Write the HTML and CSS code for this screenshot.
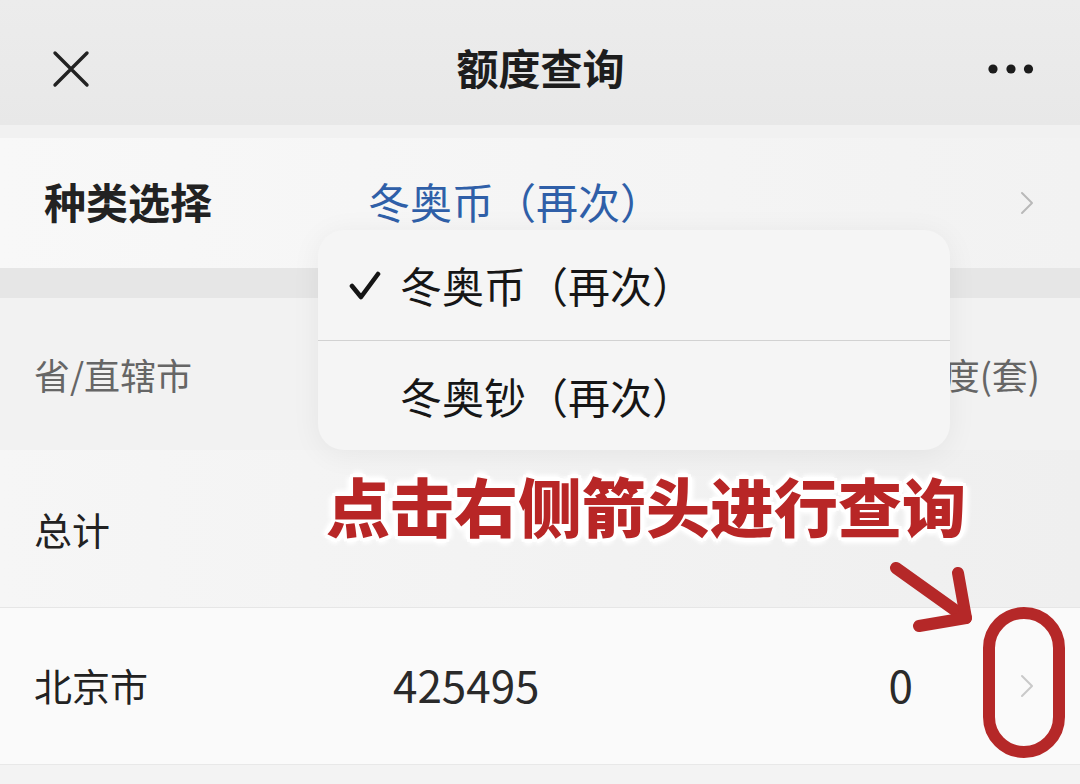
FILE: index.html
```html
<!DOCTYPE html>
<html lang="zh-CN">
<head>
<meta charset="utf-8">
<title>额度查询</title>
<link rel="stylesheet" href="styles.css">
</head>
<body>
<div class="screen">
  <header class="nav">
    <svg class="nav-close" width="40" height="40" viewBox="0 0 40 40"><path d="M4 4 L36 36 M36 4 L4 36" stroke="#222" stroke-width="3.4" stroke-linecap="round" fill="none"/></svg>
    <h1 class="nav-title">额度查询</h1>
    <svg class="nav-more" width="46" height="12" viewBox="0 0 46 12"><circle cx="5" cy="6" r="4.6" fill="#1c1c1c"/><circle cx="23" cy="6" r="4.6" fill="#1c1c1c"/><circle cx="40.5" cy="6" r="4.6" fill="#1c1c1c"/></svg>
  </header>
  <div class="gap-thin"></div>
  <section class="select-row">
    <span class="select-label">种类选择</span>
    <span class="select-value">冬奥币（再次）</span>
    <svg class="chev" width="14" height="24" viewBox="0 0 14 24"><path d="M2 2 L12 12 L2 22" stroke="#b9b9b9" stroke-width="2" fill="none" stroke-linecap="round" stroke-linejoin="round"/></svg>
  </section>
  <div class="gap-thick"></div>
  <section class="table">
    <div class="row head">
      <span class="head-cell">省/直辖市</span>
      <span class="head-cell">额度(套)</span>
    </div>
    <div class="row total">
      <span class="cell">总计</span>
    </div>
    <div class="row data">
      <span class="cell">北京市</span>
      <span class="cell num">425495</span>
      <span class="cell num right">0</span>
      <span class="chev-cell"><svg class="chev" width="14" height="24" viewBox="0 0 14 24"><path d="M2 2 L12 12 L2 22" stroke="#c9c9c9" stroke-width="2" fill="none" stroke-linecap="round" stroke-linejoin="round"/></svg></span>
    </div>
  </section>
  <div class="rest"></div>

  <div class="menu">
    <div class="menu-item"><span class="check"><svg width="32" height="30" viewBox="0 0 32 30"><path d="M3 15 L12 26 L29 3" stroke="#151515" stroke-width="4.6" fill="none" stroke-linecap="round" stroke-linejoin="round"/></svg></span><span>冬奥币（再次）</span></div>
    <div class="menu-item"><span class="check"></span><span>冬奥钞（再次）</span></div>
  </div>

  <div class="note">点击右侧箭头进行查询</div>

  <svg class="mark" width="1080" height="784" viewBox="0 0 1080 784">
    <g stroke="#b52828" stroke-width="12" stroke-linecap="round" stroke-linejoin="round" fill="none">
      <path d="M896 568 L966 618"/>
      <path d="M958 573 L966 618 L919 626"/>
      <rect x="989" y="613" width="70" height="139" rx="35" ry="35"/>
    </g>
  </svg>
</div>
</body>
</html>
```
FILE: styles.css
```css
* { box-sizing: border-box; margin: 0; padding: 0; }
html, body { width: 1080px; height: 784px; overflow: hidden; }
body {
  background: #efefef;
  font-family: "Noto Sans CJK SC", "Noto Sans", sans-serif;
  color: #222;
}
.screen {
  position: relative;
  width: 1080px;
  height: 784px;
  display: flex;
  flex-direction: column;
}
.nav {
  height: 125px;
  background: linear-gradient(180deg, #ececec 0%, #e8e8e8 100%);
  display: flex;
  align-items: center;
  justify-content: space-between;
  padding: 12px 46px 0 51px;
}
.nav-close { display: block; }
.nav-title {
  font-size: 42px;
  font-weight: 700;
  color: #1d1d1d;
  letter-spacing: 0;
  margin-left: 2px;
  margin-top: -4px;
}
.nav-more { display: block; }
.gap-thin { height: 13px; background: #f1f1f1; }
.select-row {
  height: 130px;
  background: linear-gradient(90deg, #f8f8f8 0%, #f2f2f2 100%);
  display: flex;
  align-items: center;
  padding: 0 46px 6px 44px;
}
.select-label {
  font-size: 42px;
  font-weight: 700;
  color: #222;
  width: 324px;
}
.select-value {
  font-size: 42px;
  color: #2f5fa8;
  flex: 1;
}
.select-row .chev { margin-top: 6px; }
.chev { display: block; }
.gap-thick { height: 30px; background: #e6e6e6; }
.table { display: flex; flex-direction: column; }
.row {
  display: flex;
  align-items: center;
  padding-left: 34px;
}
.head {
  height: 152px;
  background: #f2f2f2;
  justify-content: space-between;
  padding-right: 40px;
}
.head-cell { font-size: 36px; color: #666; }
.total {
  height: 158px;
  background: linear-gradient(90deg, #f6f6f6 0%, #efefef 100%);
  border-bottom: 1px solid #e6e6e6;
}
.cell { font-size: 38px; color: #222; }
.data {
  height: 157px;
  background: #fafafa;
  border-bottom: 1px solid #e8e8e8;
  padding-bottom: 4px;
}
.data .cell:first-child { width: 359px; }
.data .num { font-size: 44px; color: #2a2a2a; }
.data .num:nth-child(2) { flex: 1; }
.data .right { width: 120px; text-align: right; }
.chev-cell { width: 167px; padding-left: 107px; padding-top: 4px; }
.rest { flex: 1; background: #f3f3f3; }

.menu {
  position: absolute;
  left: 318px;
  top: 230px;
  width: 632px;
  height: 220px;
  background: #f5f5f5;
  border-radius: 26px;
  box-shadow: 0 4px 30px rgba(0,0,0,0.06);
  display: flex;
  flex-direction: column;
  overflow: hidden;
}
.menu-item {
  flex: 1;
  display: flex;
  align-items: center;
  padding-left: 31px;
  font-size: 42px;
  color: #161616;
}
.menu-item + .menu-item { border-top: 1.5px solid #d2d2d2; }
.check {
  width: 51px;
  display: flex;
  align-items: center;
}
.check svg { display: block; margin-top: 2px; }
.note {
  position: absolute;
  left: 326px;
  top: 459px;
  font-size: 64px;
  font-weight: 900;
  color: #b82626;
  letter-spacing: 0;
  line-height: 90px;
  text-shadow:
    0 0 2px #fff, 4px 0 0 #fff, -4px 0 0 #fff, 0 4px 0 #fff, 0 -4px 0 #fff,
    3px 3px 0 #fff, -3px 3px 0 #fff, 3px -3px 0 #fff, -3px -3px 0 #fff,
    6px 0 4px #fff, -6px 0 4px #fff, 0 6px 4px #fff, 0 -6px 4px #fff;
}
.mark {
  position: absolute;
  left: 0;
  top: 0;
  pointer-events: none;
}
```
